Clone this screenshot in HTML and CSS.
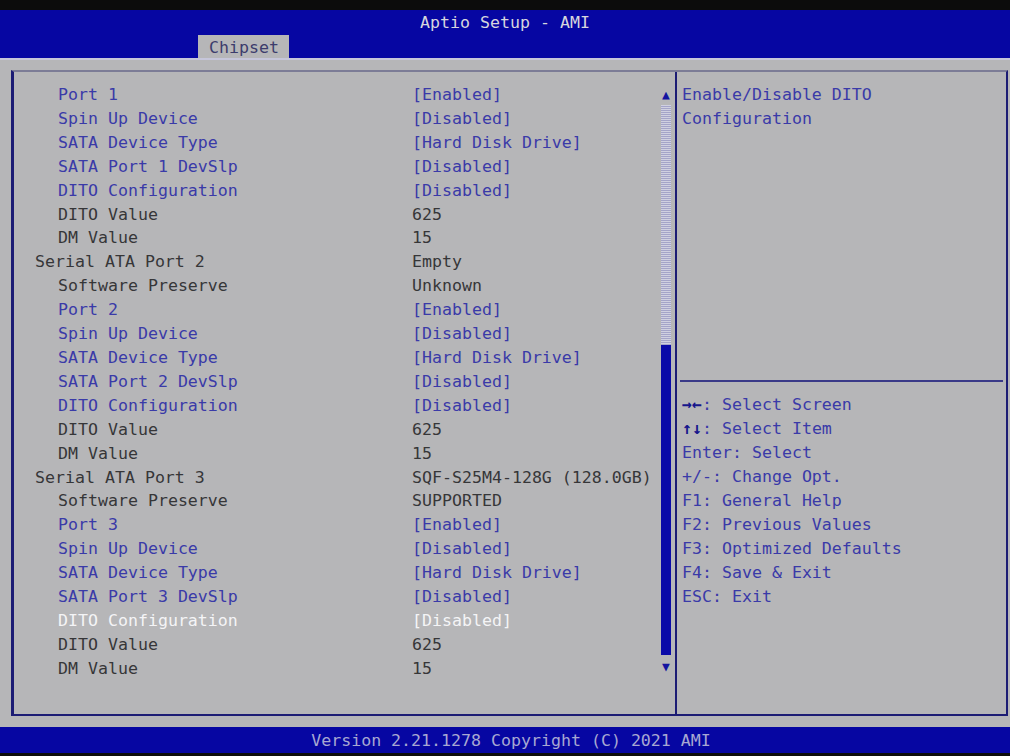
FILE: index.html
```html
<!DOCTYPE html>
<html lang="en">
<head>
  <meta charset="UTF-8" />
  <meta name="viewport" content="width=device-width, initial-scale=1.0"/>
  <title>Aptio Setup - AMI</title>
  <link rel="stylesheet" href="styles.css">
</head>
<body>
<div class="screen">
  <header class="titlebar">
    <div class="title">Aptio Setup - AMI</div>
    <div class="tabs"><span class="tab">Chipset</span></div>
  </header>

  <main class="frame">
    <section class="setup">
      <div class="items">
        <div class="row sub link"><span class="label">Port 1</span><span class="value">[Enabled]</span></div>
        <div class="row sub link"><span class="label">Spin Up Device</span><span class="value">[Disabled]</span></div>
        <div class="row sub link"><span class="label">SATA Device Type</span><span class="value">[Hard Disk Drive]</span></div>
        <div class="row sub link"><span class="label">SATA Port 1 DevSlp</span><span class="value">[Disabled]</span></div>
        <div class="row sub link"><span class="label">DITO Configuration</span><span class="value">[Disabled]</span></div>
        <div class="row sub"><span class="label">DITO Value</span><span class="value">625</span></div>
        <div class="row sub"><span class="label">DM Value</span><span class="value">15</span></div>
        <div class="row"><span class="label">Serial ATA Port 2</span><span class="value">Empty</span></div>
        <div class="row sub"><span class="label">Software Preserve</span><span class="value">Unknown</span></div>
        <div class="row sub link"><span class="label">Port 2</span><span class="value">[Enabled]</span></div>
        <div class="row sub link"><span class="label">Spin Up Device</span><span class="value">[Disabled]</span></div>
        <div class="row sub link"><span class="label">SATA Device Type</span><span class="value">[Hard Disk Drive]</span></div>
        <div class="row sub link"><span class="label">SATA Port 2 DevSlp</span><span class="value">[Disabled]</span></div>
        <div class="row sub link"><span class="label">DITO Configuration</span><span class="value">[Disabled]</span></div>
        <div class="row sub"><span class="label">DITO Value</span><span class="value">625</span></div>
        <div class="row sub"><span class="label">DM Value</span><span class="value">15</span></div>
        <div class="row"><span class="label">Serial ATA Port 3</span><span class="value">SQF-S25M4-128G (128.0GB)</span></div>
        <div class="row sub"><span class="label">Software Preserve</span><span class="value">SUPPORTED</span></div>
        <div class="row sub link"><span class="label">Port 3</span><span class="value">[Enabled]</span></div>
        <div class="row sub link"><span class="label">Spin Up Device</span><span class="value">[Disabled]</span></div>
        <div class="row sub link"><span class="label">SATA Device Type</span><span class="value">[Hard Disk Drive]</span></div>
        <div class="row sub link"><span class="label">SATA Port 3 DevSlp</span><span class="value">[Disabled]</span></div>
        <div class="row sub selected"><span class="label">DITO Configuration</span><span class="value">[Disabled]</span></div>
        <div class="row sub"><span class="label">DITO Value</span><span class="value">625</span></div>
        <div class="row sub"><span class="label">DM Value</span><span class="value">15</span></div>
      </div>

      <div class="scrollbar">
        <span class="arrow">&#9650;</span>
        <div class="track"></div>
        <div class="thumb"></div>
        <span class="arrow">&#9660;</span>
      </div>
    </section>

    <aside class="help">
      <div class="desc">Enable/Disable DITO<br>Configuration</div>
      <hr class="divider">
      <div class="keys">
        <div><span class="key">&rarr;&larr;</span>: Select Screen</div>
        <div><span class="key">&uarr;&darr;</span>: Select Item</div>
        <div>Enter: Select</div>
        <div>+/-: Change Opt.</div>
        <div>F1: General Help</div>
        <div>F2: Previous Values</div>
        <div>F3: Optimized Defaults</div>
        <div>F4: Save &amp; Exit</div>
        <div>ESC: Exit</div>
      </div>
    </aside>
  </main>

  <footer class="version">Version 2.21.1278 Copyright (C) 2021 AMI</footer>
</div>
</body>
</html>
```

FILE: styles.css
```css
    body {
      margin: 0;
      background: #0c0c0c;
      font-family: 'DejaVu Sans Mono', 'Liberation Mono', monospace;
      font-size: 16.6px;
    }
    .screen {
      width: 1010px;
      height: 756px;
      overflow: hidden;
      display: flex;
      flex-direction: column;
      background: #b6b6b8;
    }
    .titlebar {
      border-top: 10px solid #0c0c0c;
      border-bottom: 2px solid #c6c6da;
      background: #0606a2;
      height: 48px;
      display: flex;
      flex-direction: column;
    }
    .title {
      color: #d6d6de;
      text-align: center;
      line-height: 24px;
      padding-top: 1px;
    }
    .tabs {
      padding-left: 198px;
    }
    .tab {
      display: inline-block;
      height: 23px;
      line-height: 25px;
      padding: 0 10px 0 11px;
      background: #b6b6b8;
      color: #3c3c6c;
    }
    .frame {
      margin: 10px 2px 0 11px;
      height: 646px;
      border: 2px solid #1c1c74;
      border-left-width: 3px;
      border-top-color: #7c7c96;
      display: grid;
      grid-template-columns: 661px 1fr;
    }
    .setup {
      display: grid;
      grid-template-columns: 1fr 10px;
      padding: 11px 4px 0 0;
    }
    .row {
      display: grid;
      grid-template-columns: 398px 1fr;
      line-height: 23.9px;
      color: #363638;
      white-space: nowrap;
    }
    .row .label {
      padding-left: 21px;
    }
    .row.sub .label {
      padding-left: 44px;
    }
    .row.link {
      color: #3a3aa8;
    }
    .row.selected {
      color: #f4f4f6;
    }
    .scrollbar {
      display: flex;
      flex-direction: column;
      align-items: center;
    }
    .arrow {
      height: 22px;
      line-height: 24px;
      font-size: 13px;
      color: #1414a0;
    }
    .track {
      width: 10px;
      height: 240px;
      background: repeating-linear-gradient(0deg, #a4a4c8 0 1px, #d0d0e0 1px 2px);
    }
    .thumb {
      width: 10px;
      height: 310px;
      background: #0a0aa8;
    }
    .help {
      border-left: 2px solid #1c1c74;
      color: #3a3aa8;
      display: flex;
      flex-direction: column;
    }
    .desc {
      height: 297px;
      padding: 11px 0 0 5px;
      line-height: 24px;
    }
    .divider {
      margin: 0 3px;
      border: none;
      border-top: 2px solid #3a3a88;
      height: 0;
    }
    .keys {
      margin-top: 11px;
      padding-left: 5px;
      line-height: 24px;
    }
    .key {
      color: #16168c;
      font-weight: bold;
    }
    .version {
      margin-top: 11px;
      height: 26px;
      line-height: 27px;
      background: #0606a2;
      border-bottom: 3px solid #0c0c0c;
      color: #a8a8d2;
      text-align: center;
      padding-left: 12px;
    }
```
